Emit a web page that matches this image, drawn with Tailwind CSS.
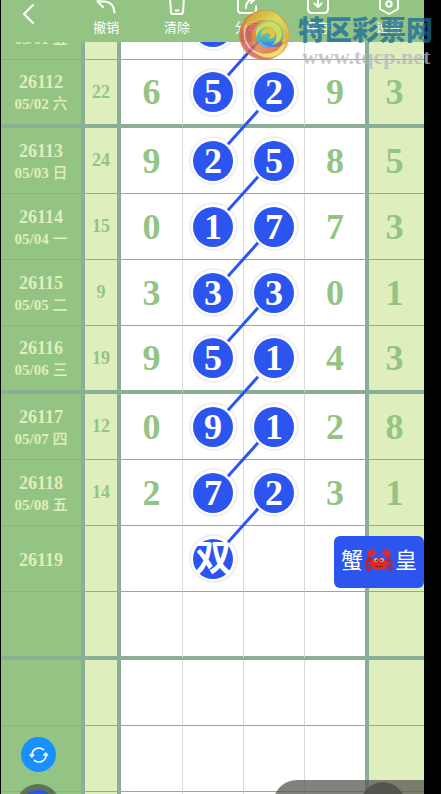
<!DOCTYPE html>
<html lang="zh-CN">
<head>
  <meta charset="UTF-8">
  <meta name="viewport" content="width=device-width, initial-scale=1.0">
  <script src="https://cdn.jsdelivr.net/npm/@tailwindcss/browser@4"></script>
  <title>走势图</title>
</head>
<body class="bg-black font-['Liberation_Sans','Noto_Sans_CJK_SC',sans-serif]">
  <div class="relative h-screen overflow-hidden pl-px pr-[17px]">
    <div class="relative flex h-full flex-col overflow-hidden bg-white">

      <!-- 顶部工具栏 -->
      <header class="relative z-30 flex h-[42px] shrink-0 items-end bg-[#93c483] text-white">
        <button class="flex h-full w-[70px] items-center pb-4 pl-5" aria-label="返回">
          <svg class="h-6 w-4" viewBox="0 0 16 24" fill="none" stroke="currentColor" stroke-width="2.2" stroke-linecap="round" stroke-linejoin="round"><path d="M12 4 3 13l9 9"/></svg>
        </button>
        <nav class="grid flex-1 grid-cols-5 text-[13px] leading-4">
          <button class="flex flex-col items-center gap-1 pb-[6px]">
            <svg class="size-6 shrink-0" viewBox="0 0 24 24" fill="none" stroke="currentColor" stroke-width="2" stroke-linecap="round" stroke-linejoin="round"><path d="M9 4 3.500 9.500 9 15M3.500 9.500H11q9 1 9.500 11"/></svg>
            撤销
          </button>
          <button class="flex flex-col items-center gap-1 pb-[6px]">
            <svg class="size-6 shrink-0" viewBox="0 0 24 24" fill="none" stroke="currentColor" stroke-width="2" stroke-linecap="round" stroke-linejoin="round"><path d="M2 6h20M5 6l1 14q.2 2 2 2h8q1.800 0 2-2l1-14M10.500 18.500h3"/></svg>
            清除
          </button>
          <button class="flex flex-col items-center gap-1 pb-[6px]">
            <svg class="size-6 shrink-0" viewBox="0 0 24 24" fill="none" stroke="currentColor" stroke-width="2" stroke-linecap="round" stroke-linejoin="round"><path d="M9 5H6Q3 5 3 8v10q0 3 3 3h12q3 0 3-3v-4M11 16q0-8 8-9M16 3l4 4-4 4"/></svg>
            分享
          </button>
          <button class="flex flex-col items-center gap-1 pb-[6px]">
            <svg class="size-6 shrink-0" viewBox="0 0 24 24" fill="none" stroke="currentColor" stroke-width="2" stroke-linecap="round" stroke-linejoin="round"><path d="M7 5H5Q2 5 2 8v9q0 4 4 4h12q4 0 4-4V8q0-3-3-3h-2M12 4v11M8.500 11.500 12 15l3.500-3.500"/></svg>
            保存
          </button>
          <button class="flex flex-col items-center gap-1 pb-[6px]">
            <svg class="size-6 shrink-0" viewBox="0 0 24 24" fill="none" stroke="currentColor" stroke-width="2" stroke-linejoin="round"><path d="m12 1 9 5v11l-9 5-9-5V6z"/><circle cx="12" cy="12" r="2.700"/></svg>
            设置
          </button>
        </nav>
      </header>

      <!-- 走势表 -->
      <div class="min-h-0 flex-1">
        <table class="-mt-12 w-full table-fixed border-separate border-spacing-0 text-center font-['Liberation_Serif','Noto_Sans_CJK_SC',serif] font-bold">
          <colgroup>
            <col class="w-[84px]">
            <col class="w-9">
            <col class="w-[61px]">
            <col class="w-[61px]">
            <col class="w-[61px]">
            <col class="w-[61px]">
            <col>
          </colgroup>
          <tbody></tbody>
        </table>
      </div>

      <!-- 下期标签 -->
      <div class="absolute top-[536px] right-0 z-30 flex h-[52px] w-[90px] items-center justify-center gap-[2px] rounded-md bg-[#2b55ee] pb-1 text-[22px] text-white">
        <span>蟹</span>
        <svg class="h-6 w-7 shrink-0" viewBox="0 0 28 24">
          <g fill="none" stroke="#c9201d" stroke-width="1.800" stroke-linecap="round"><path d="M7 14l-5-2-1 3M6 17l-4 0-1 3M8 19l-4 1-1 3M21 14l5-2 1 3M22 17l4 0 1 3M20 19l4 1 1 3"/><path d="M8 13Q3 11 4 7M20 13q5-2 4-6" stroke-width="2.400"/></g>
          <path d="M4 9Q0 4 6 1l4-.5L7 4l5-1Q11 8 4 9zM24 9q4-5-2-8l-4-.5L21 4l-5-1q1 5 8 6z" fill="#e02b24"/>
          <path d="M5 15q1-5 9-5t9 5q0 7-9 7t-9-7z" fill="#e02b24"/>
          <path d="M10 18q4 2 8 0" fill="none" stroke="#8f1414"/>
          <circle cx="11" cy="12" r="1.700" fill="#fff"/><circle cx="17" cy="12" r="1.700" fill="#fff"/>
          <circle cx="11.300" cy="12.200" r="1" fill="#222"/><circle cx="16.700" cy="12.200" r="1" fill="#222"/>
        </svg>
        <span>皇</span>
      </div>

      <!-- 悬浮按钮 -->
      <button class="absolute bottom-[22px] left-5 z-30 flex size-[35px] items-center justify-center rounded-full bg-[#1890ff] text-white" aria-label="刷新">
        <svg class="size-5" viewBox="0 0 20 20" fill="none" stroke="currentColor" stroke-width="1.600" stroke-linecap="round"><path d="M3 10.500A7 7 0 0 1 14.500 4.700M17 9.500A7 7 0 0 1 5.500 15.300"/><path d="M1 9.800h4.200L3.100 12.300zM14.800 10.200H19l-2.100-2.500z" fill="currentColor" stroke-width="1"/></svg>
      </button>
      <button class="absolute -bottom-[34px] left-[15px] z-30 flex size-11 items-center justify-center rounded-full bg-[#5f6f58]" aria-label="颜色">
        <span class="size-8 rounded-full bg-[#2b55ee]"></span>
      </button>
      <div class="absolute right-0 -bottom-[34px] z-30 flex h-12 w-[151px] items-center justify-end rounded-l-[24px] bg-[#5a5751]/75 pr-[19px]">
        <button class="size-11 rounded-full bg-[#4b4b49]/80" aria-label="更多"></button>
      </div>
    </div>

    <!-- 水印 -->
    <div class="pointer-events-none absolute top-[9px] right-2 z-40 flex items-start gap-2">
      <svg class="size-[52px] shrink-0 opacity-80" viewBox="0 0 52 52">
        <defs>
          <linearGradient id="rim" x1="0" y1="0" x2="1" y2="1">
            <stop offset="0" stop-color="#d8662f"/><stop offset=".5" stop-color="#e8843a"/><stop offset="1" stop-color="#c9463f"/>
          </linearGradient>
          <linearGradient id="gold" x1="0" y1="0" x2="1" y2="1">
            <stop offset="0" stop-color="#d98a22"/><stop offset=".45" stop-color="#f6e04a"/><stop offset="1" stop-color="#e8912c"/>
          </linearGradient>
          <linearGradient id="sea" x1="0" y1="0" x2="0" y2="1">
            <stop offset="0" stop-color="#a5d86a"/><stop offset=".5" stop-color="#4fc0b4"/><stop offset="1" stop-color="#3a8fe0"/>
          </linearGradient>
        </defs>
        <circle cx="26" cy="26" r="25" fill="url(#rim)"/>
        <path d="M9 10Q24-5 40 6q12 9 11 24-2 14-14 18 9-9 7-23Q40 12 27 11q-12 0-18 9-3-4 0-10z" fill="url(#gold)"/>
        <path d="M3 20q-3 16 9 25 9 6 18 4-13-5-16-16-2-12 7-19Q10 12 6 24z" fill="#d4564c"/>
        <path d="M8 16Q3 31 14 41q7 6 15 6" fill="none" stroke="#fff" stroke-opacity=".6" stroke-width="1.500"/>
        <path d="M14 39q10 9 22 4 8-4 11-13 1 12-9 17-14 6-24-8z" fill="#ecd94a"/>
        <circle cx="31" cy="25" r="14" fill="url(#sea)"/>
        <path d="M18 30q-2-14 12-17 12 0 14 11 0 10-10 12 6-5 4-12-3-7-10-6-9 2-10 12z" fill="#e4e04c"/>
        <path d="M23 27q0-8 8-8 7 1 6 7-2 5-7 3 3-1 2-4-3-3-9 2z" fill="#f3c63a"/>
      </svg>
      <div class="flex flex-col pt-[6px]">
        <span class="text-[27px] leading-8 font-black text-[#19689a]/75">特区彩票网</span>
        <span class="pl-1 font-['Liberation_Serif',serif] text-[22px] leading-5 font-bold text-[#b5b5bd]/75">www.tqcp.net</span>
      </div>
    </div>
  </div>

  <script>
    // 期号, 日期, 和值, 五位号码, 是否粗分隔线
    const rows = [
      { no: '26111', date: '05/01', day: '五', sum: 21, nums: [1, 5, 2, 6, 7] },
      { no: '26112', date: '05/02', day: '六', sum: 22, nums: [6, 5, 2, 9, 3], thick: true },
      { no: '26113', date: '05/03', day: '日', sum: 24, nums: [9, 2, 5, 8, 5] },
      { no: '26114', date: '05/04', day: '一', sum: 15, nums: [0, 1, 7, 7, 3] },
      { no: '26115', date: '05/05', day: '二', sum: 9, nums: [3, 3, 3, 0, 1] },
      { no: '26116', date: '05/06', day: '三', sum: 19, nums: [9, 5, 1, 4, 3], thick: true },
      { no: '26117', date: '05/07', day: '四', sum: 12, nums: [0, 9, 1, 2, 8] },
      { no: '26118', date: '05/08', day: '五', sum: 14, nums: [2, 7, 2, 3, 1] },
      { no: '26119', nums: ['', '双', '', '', ''] },
      { thick: true },
      {},
      {},
      {}
    ];

    // 连到上一期第三位的斜线
    const link = `
      <svg class="absolute bottom-1/2 left-1/2 z-20 h-[67px] w-full overflow-visible" aria-hidden="true">
        <line x1="25%" y1="75%" x2="75%" y2="25%" stroke="#2b55ee" stroke-width="3"/>
      </svg>`;

    const ball = value => `
      <span class="relative z-10 mx-auto flex size-[49px] items-center justify-center rounded-full border-2 border-[#f1efef] bg-white">
        <span class="flex size-10 items-center justify-center rounded-full bg-[#2b55ee] text-white">${value}</span>
      </span>`;

    const tbody = document.querySelector('tbody');
    rows.forEach((row, index) => {
      const height = row.thick ? 'h-[68px] border-b-4' : 'h-[66px] border-b';
      const nums = row.nums || ['', '', '', '', ''];
      const tr = document.createElement('tr');

      let html = `
        <th class="${height} border-r-4 border-[#8aaf96] bg-[#93c483] px-0 pt-[2px] pb-0 text-[18px] leading-5 text-[#e0eebc]">
          ${row.no || ''}
          ${row.date ? `<div class="pt-[2px] text-[15px] leading-5">${row.date} <span class="font-medium">${row.day}</span></div>` : ''}
        </th>
        <td class="${height} border-r-4 border-[#8aaf96] bg-[#dfeebd] p-0 text-[18px] text-[#93c483]">${row.sum || ''}</td>`;

      nums.forEach((num, i) => {
        const picked = (i === 1 || i === 2) && num !== '';
        const side = i === 0 ? 'px-0' : i === 4 ? 'border-l-4 bg-[#dfeebd] pl-0 pr-1' : 'border-l border-l-[#d5dbd5] px-0';
        html += `
          <td class="${height} ${side} relative border-[#8aaf96] py-0 text-[36px] leading-10 text-[#93c483]">
            ${picked ? ball(num) : num}
            ${picked && i === 1 && index > 0 ? link : ''}
          </td>`;
      });

      tr.innerHTML = html;
      tbody.appendChild(tr);
    });
  </script>
</body>
</html>
